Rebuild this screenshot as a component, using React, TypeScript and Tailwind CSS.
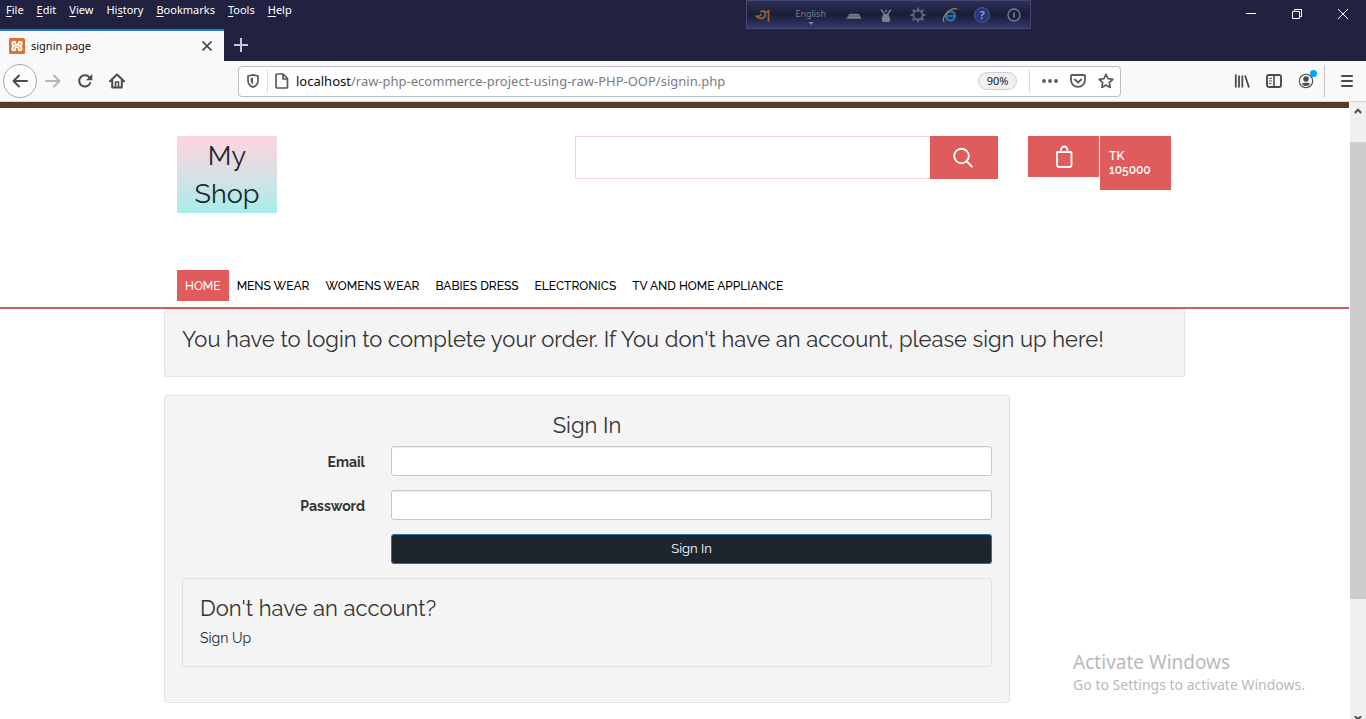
import type { ReactNode } from "react";

const menus: [string, string, string][] = [
  ["", "F", "ile"],
  ["", "E", "dit"],
  ["", "V", "iew"],
  ["Hi", "s", "tory"],
  ["", "B", "ookmarks"],
  ["", "T", "ools"],
  ["", "H", "elp"],
];

const categories = ["HOME", "MENS WEAR", "WOMENS WEAR", "BABIES DRESS", "ELECTRONICS", "TV AND HOME APPLIANCE"];

const gearTeeth = Array.from({ length: 8 }, (_, i) => i * 45);

function Icon({ children, className = "size-4" }: { children: ReactNode; className?: string }) {
  return (
    <svg
      viewBox="0 0 16 16"
      className={`shrink-0 ${className}`}
      fill="none"
      stroke="currentColor"
      strokeWidth="2"
      strokeLinecap="round"
      strokeLinejoin="round"
      aria-hidden="true"
    >
      {children}
    </svg>
  );
}

function MenuBar() {
  return (
    <nav aria-label="Menu" className="flex gap-[13px] px-1.5 pt-0.5 text-[11px] leading-4 text-white">
      {menus.map(([before, key, after]) => (
        <button key={key + after} type="button">
          {before}
          <span className="underline underline-offset-2">{key}</span>
          {after}
        </button>
      ))}
    </nav>
  );
}

function LanguageBar() {
  return (
    <div className="absolute left-[746px] top-0 flex h-[29px] w-[285px] items-center justify-end gap-4 border border-[#454870] bg-linear-to-b from-[#2e3158] via-[#1b1d37] to-[#34376a] px-2 text-[#7b7d92]">
      <button type="button" aria-label="Bangla" className="mr-auto">
        <Icon className="size-4 text-[#91692f]">
          <path d="M6 4.500c3-1.500 5 .5 4.300 3.500C9.500 11.500 5 13 1 9c2.500 1 4.500 0 5-1.500M9 5c1.500 1 3 0 4.500-1.500V14" strokeWidth="1.700" />
        </Icon>
      </button>
      <button type="button" className="mr-1 flex flex-col items-center gap-0.5 pt-1 text-[9px] leading-3">
        English
        <svg viewBox="0 0 6 3" className="h-[3px] w-1.5" fill="currentColor" aria-hidden="true">
          <path d="M0 0h6L3 3z" />
        </svg>
      </button>
      <button type="button" aria-label="Keyboard">
        <Icon>
          <path d="M3.500 7h9L15 11.500H1z" fill="currentColor" strokeWidth=".5" />
          <path d="M3 9h10" stroke="#4b4d68" strokeWidth="1" strokeDasharray="1 1" />
        </Icon>
      </button>
      <button type="button" aria-label="Mouse">
        <Icon>
          <path d="M6 7.500h4l1.800 5-.8 2H5l-.8-2z" fill="currentColor" strokeWidth="1" />
          <path d="m6.500 7.500-3-4.500M9.500 7.500l3-4.500M8 5V3" strokeWidth="1.500" />
        </Icon>
      </button>
      <button type="button" aria-label="Settings">
        <Icon className="size-4 text-[#5f637f]">
          <circle cx="8" cy="8" r="4.600" />
          {gearTeeth.map((angle) => (
            <path key={angle} d="M8 2V1.500" transform={`rotate(${angle} 8 8)`} strokeLinecap="square" />
          ))}
        </Icon>
      </button>
      <button type="button" aria-label="Web site">
        <Icon className="size-4 text-[#276ba5]">
          <path d="M12.500 11c-2 4-8.500 3-8.500-2 0-6 9-6 9 0H5" strokeWidth="2.500" />
          <path d="M2 14.500C-1 11 8 0 15 2" stroke="#a0824b" strokeWidth="1.300" />
        </Icon>
      </button>
      <button type="button" aria-label="Help" className="flex size-4 items-center justify-center rounded-full border border-[#4c5596] bg-[#2a3580] text-[11px] leading-3 font-bold text-[#9095b8]">
        ?
      </button>
      <button type="button" aria-label="About">
        <Icon>
          <circle cx="8" cy="8" r="6" strokeWidth="1.300" />
          <path d="M8 6v4" strokeWidth="1.600" />
        </Icon>
      </button>
    </div>
  );
}

function WindowButtons() {
  return (
    <div className="absolute right-[17px] top-2 flex gap-[34px] text-white">
      <button type="button" aria-label="Minimize">
        <svg viewBox="0 0 12 12" className="size-3" stroke="currentColor" fill="none" aria-hidden="true">
          <path d="M1 5.500h10" />
        </svg>
      </button>
      <button type="button" aria-label="Restore">
        <svg viewBox="0 0 12 12" className="size-3" stroke="currentColor" fill="none" aria-hidden="true">
          <path d="M1.500 3.500h7v7h-7zM3.500 3.500v-2h7v7h-2" />
        </svg>
      </button>
      <button type="button" aria-label="Close">
        <svg viewBox="0 0 12 12" className="size-3" stroke="currentColor" fill="none" aria-hidden="true">
          <path d="m1 1 10 10M11 1 1 11" />
        </svg>
      </button>
    </div>
  );
}

function Tabs() {
  return (
    <div className="flex h-8 items-stretch">
      <div className="flex w-56 items-center border-t-2 border-[#2678d8] bg-[#f9f9fb] px-2 pl-[9px]">
        <svg viewBox="0 0 16 16" className="size-4 shrink-0" aria-hidden="true">
          <rect width="16" height="16" rx="1.500" fill="#e0702d" />
          <path
            d="M5 3.700C2.800 3.700 2.800 7 5 8c-2.200 1-2.200 4.300 0 4.300 1.500 0 1.300-1 1.300-2.300 0-1 3.400-1 3.400 0 0 1.300-.2 2.300 1.300 2.300 2.200 0 2.200-3.300 0-4.300 2.200-1 2.200-4.300 0-4.300-1.500 0-1.300 1-1.300 2.300 0 1-3.400 1-3.400 0 0-1.300.2-2.300-1.300-2.300z"
            fill="none"
            stroke="#fff"
            strokeWidth="1.900"
          />
        </svg>
        <span className="ml-1.5 flex-1 text-[11px] leading-4 text-[#0c0c0d]">signin page</span>
        <button type="button" aria-label="Close tab" className="text-[#3b3b3f]">
          <svg viewBox="0 0 16 16" className="size-[18px]" stroke="currentColor" strokeWidth="1.500" aria-hidden="true">
            <path d="m4 4 8 8M12 4l-8 8" />
          </svg>
        </button>
      </div>
      <button type="button" aria-label="New tab" className="px-2 text-[#c8c8d4]">
        <svg viewBox="0 0 18 18" className="size-[18px]" stroke="currentColor" strokeWidth="2" aria-hidden="true">
          <path d="M9 2v14M2 9h14" />
        </svg>
      </button>
    </div>
  );
}

function Toolbar() {
  return (
    <div className="flex h-[41px] items-center border-b border-[#d6d6da] bg-[#f9f9fb] text-[#4a4a4f]">
      <div className="flex w-[238px] shrink-0 items-center gap-4 pl-[3px]">
        <button type="button" aria-label="Back" className="flex size-[34px] items-center justify-center rounded-full border border-[#a9a9ad] bg-[#fcfcfd]">
          <Icon><path d="M15 8H1.500M7 2.500 1.500 8 7 13.500" /></Icon>
        </button>
        <button type="button" aria-label="Forward" className="-ml-2 text-[#b4b4b9]">
          <Icon><path d="M1 8h13.500M9 2.500l5.500 5.500L9 13.500" /></Icon>
        </button>
        <button type="button" aria-label="Reload">
          <Icon>
            <path d="M12.500 4.500A5.700 5.700 0 1 0 13.200 10" />
            <path d="M15.300 1v6.300H9z" fill="currentColor" stroke="none" />
          </Icon>
        </button>
        <button type="button" aria-label="Home">
          <Icon>
            <path d="M1 8.200 8 1.500l7 6.700M3.200 7.500V14.500h9.600V7.500" />
            <path d="M6.500 14V9h3v5" strokeWidth="1.600" />
          </Icon>
        </button>
      </div>
      <div className="flex h-[31px] min-w-0 flex-1 items-center rounded-sm border border-[#bdbdc1] bg-white px-1.5 text-[#5a5a5f]">
        <button type="button" aria-label="Tracking protection" className="h-6 border-r border-[#dcdcdf] pr-1.5">
          <Icon>
            <path d="M8 1.800 13 3v4.500c0 3-2 5.500-5 6.700-3-1.200-5-3.700-5-6.700V3z" strokeWidth="1.700" />
            <path d="M8 4.500v7c-1.500-1-2.300-2.500-2.300-4V5z" fill="currentColor" stroke="none" />
          </Icon>
        </button>
        <Icon className="ml-1.5 size-4">
          <path d="M4 1h5l4.500 4.500V14a1 1 0 0 1-1 1H3a1 1 0 0 1-1-1V2a1 1 0 0 1 1-1h1M9 1.200V6h4.500" strokeWidth="1.700" />
        </Icon>
        <p className="ml-1.5 flex-1 truncate text-[13px] leading-5 text-[#7b7b80]">
          <span className="text-[#0c0c0d]">localhost</span>/raw-php-ecommerce-project-using-raw-PHP-OOP/signin.php
        </p>
        <button type="button" className="h-[18px] w-[39px] rounded-full border border-[#cfcfd2] bg-[#f0f0f2] text-[11px] leading-4 text-[#18181a]">
          90%
        </button>
        <div className="ml-3 flex h-6 items-center gap-3 border-l border-[#dcdcdf] pl-3">
          <button type="button" aria-label="Page actions">
            <Icon>
              <path d="M2 8h.01M8 8h.01M14 8h.01" strokeWidth="3.800" />
            </Icon>
          </button>
          <button type="button" aria-label="Save to Pocket">
            <Icon>
              <path d="M2 2h12c.6 0 1 .4 1 1v4.200a7 6.600 0 0 1-14 0V3c0-.6.4-1 1-1z" strokeWidth="1.800" />
              <path d="M4.800 6.500 8 9.500l3.200-3" strokeWidth="1.800" />
            </Icon>
          </button>
          <button type="button" aria-label="Bookmark this page">
            <Icon>
              <path d="m8 1.300 2 4.400 4.900.6-3.600 3.300.9 4.800L8 12l-4.200 2.400.9-4.800L1.100 6.300 6 5.700z" strokeWidth="1.700" />
            </Icon>
          </button>
        </div>
      </div>
      <div className="ml-[113px] flex h-8 shrink-0 items-center gap-4">
        <button type="button" aria-label="Library">
          <Icon>
            <path d="M1.800 1.500v13M5 2.500v12M8.300 2.500v12M11 2.500l4 12" strokeLinecap="butt" strokeWidth="1.800" />
          </Icon>
        </button>
        <button type="button" aria-label="Sidebars">
          <Icon>
            <rect x="1" y="2" width="14" height="12" rx="2" strokeWidth="1.900" />
            <path d="M8 2v12" strokeWidth="1.600" />
            <path d="M3.500 5.500h2M3.500 8h2M3.500 10.500h1.500" strokeWidth="1" />
          </Icon>
        </button>
        <button type="button" aria-label="Account" className="relative">
          <Icon>
            <circle cx="8" cy="8" r="6.700" strokeWidth="1.100" />
            <circle cx="8" cy="6" r="2.800" fill="currentColor" stroke="none" />
            <path d="M3.800 10.500C5.500 9.600 10.500 9.600 12.200 10.500 11.500 12 10 13 8 13s-3.500-1-4.200-2.500z" fill="currentColor" stroke="none" />
          </Icon>
          <span className="absolute -right-[3px] -top-[3px] size-[7px] rounded-full bg-[#00a5f5]" />
        </button>
        <button type="button" aria-label="Open menu" className="-ml-1.5 flex h-full items-center border-l border-[#c5c5c9] pl-3.5 pr-[11px]">
          <Icon>
            <path d="M3 3h10M3 8h10M3 13h10" />
          </Icon>
        </button>
      </div>
    </div>
  );
}

function ShopHeader() {
  return (
    <header className="border-b-2 border-[#cc6060] pb-1.5 pt-7">
      <div className="mx-auto max-w-[1021px] pl-[13px] pr-3.5">
        <div className="flex h-[134px] items-start">
          <a href="#home" className="w-[100px] bg-linear-to-b from-[#ffd3e0] to-[#a6edea] pt-px text-center text-[27px] leading-[38px] text-[#1c2630]">
            My
            <br />
            Shop
          </a>
          <form className="ml-auto flex h-[43px] w-[423px]">
            <input type="search" aria-label="Search" className="min-w-0 flex-1 border border-r-0 border-[#edd6ce] bg-white px-3 text-sm outline-none" />
            <button type="button" aria-label="Search" className="flex w-[68px] items-center justify-center bg-[#e05b5c] text-white">
              <svg viewBox="0 0 22 22" className="mr-0.5 size-[22px]" fill="none" stroke="currentColor" strokeWidth="1.900" strokeLinecap="round" aria-hidden="true">
                <circle cx="9.500" cy="9" r="7.300" />
                <path d="m14.800 14.300 5 5.200" />
              </svg>
            </button>
          </form>
          <a href="#cart" className="ml-[30px] flex items-start gap-px text-white">
            <span className="flex h-[41px] w-[71px] items-center justify-center bg-[#e05b5c]">
              <svg viewBox="0 0 22 24" className="h-6 w-[22px]" fill="none" stroke="currentColor" strokeWidth="1.800" strokeLinejoin="round" aria-label="Cart">
                <path d="M4 7h14.500v13a2 2 0 0 1-2 2H6a2 2 0 0 1-2-2zM8 7V5a3.250 3.500 0 0 1 6.500 0v2" />
              </svg>
            </span>
            <span className="flex h-[54px] w-[71px] items-center bg-[#e05b5c] px-[9px] text-[12px] leading-[14px] font-semibold">
              TK
              <br />
              105000
            </span>
          </a>
        </div>
        <nav aria-label="Categories" className="flex">
          {categories.map((name, i) => (
            <a
              key={name}
              href={"#" + name.toLowerCase().replaceAll(" ", "-")}
              className={`px-2 pt-px text-[12px] leading-[30px] font-medium ${i === 0 ? "bg-[#e05b5c] text-white" : "text-black"}`}
            >
              {name}
            </a>
          ))}
        </nav>
      </div>
    </header>
  );
}

const well = "rounded-[3px] border border-[#e2e2e2] bg-[#f4f4f4] px-[17px] pt-[17px]";
const heading = "text-[22px] leading-6";
const field = "h-[30px] w-full rounded-[3px] border border-[#c8c8c8] bg-white px-3 text-sm shadow-[inset_0_1px_1px_rgba(0,0,0,0.075)] outline-none";
const label = "pt-0.5 text-right text-[14px] leading-5 font-bold text-[#333]";

function SignIn() {
  return (
    <main className="mx-auto max-w-[1021px] text-[#333]">
      <section className={`${well} pb-[25px]`}>
        <h1 className={heading}>
          You have to login to complete your order. If You don't have an account, please sign up here!
        </h1>
      </section>
      <section className={`${well} mt-[18px] max-w-[846px] pb-[35px]`}>
        <h2 className={`${heading} mb-[9px] text-center`}>Sign In</h2>
        <form className="grid grid-cols-[183px_1fr] items-center gap-x-[26px] gap-y-3.5">
          <label htmlFor="email" className={label}>Email</label>
          <input id="email" type="email" className={field} />
          <label htmlFor="password" className={label}>Password</label>
          <input id="password" type="password" className={field} />
          <button type="button" className="col-start-2 h-[30px] rounded-[3px] border border-[#2f6da4] bg-[#1d252f] text-[13px] leading-5 text-white">
            Sign In
          </button>
        </form>
        <div className={`${well} mt-3.5 pb-[18px]`}>
          <h2 className={heading}>Don't have an account?</h2>
          <a href="#signup" className="mt-2 block text-[14px] leading-5 text-[#1d252f]">Sign Up</a>
        </div>
      </section>
    </main>
  );
}

function Scrollbar() {
  return (
    <div className="flex w-[17px] shrink-0 flex-col border-l border-white bg-[#f0f0f0] text-[#505050]">
      <button type="button" aria-label="Scroll up" className="flex h-[17px] items-center justify-center">
        <svg viewBox="0 0 8 6" className="h-1.5 w-2" fill="none" stroke="currentColor" strokeWidth="2" aria-hidden="true">
          <path d="m.8 5 3.200-3.300L7.200 5" />
        </svg>
      </button>
      <div className="flex flex-1 flex-col">
        <div className="flex-[23]" />
        <div className="flex-[457] bg-[#cdcdcd]" />
        <div className="flex-[109]" />
      </div>
      <button type="button" aria-label="Scroll down" className="flex h-[11px] items-end justify-center overflow-hidden">
        <svg viewBox="0 0 8 3" className="h-[3px] w-2" fill="none" stroke="currentColor" strokeWidth="2" aria-hidden="true">
          <path d="m.8 0 3.200 3.300L7.200 0" />
        </svg>
      </button>
    </div>
  );
}

export default function App() {
  return (
    <div className="relative flex h-screen flex-col overflow-hidden bg-white font-['Noto_Sans','Open_Sans',sans-serif]">
      <div className="flex h-[61px] shrink-0 flex-col justify-between bg-[#20223f]">
        <MenuBar />
        <Tabs />
      </div>
      <LanguageBar />
      <WindowButtons />
      <Toolbar />
      <div className="flex min-h-0 flex-1">
        <div className="min-w-0 flex-1 overflow-hidden border-t-[6px] border-[#573b29] font-[Raleway,Lato,sans-serif]">
          <ShopHeader />
          <SignIn />
        </div>
        <Scrollbar />
      </div>
      <aside className="pointer-events-none absolute bottom-[23px] right-[61px] text-[#b9b9b9]">
        <p className="text-[19px] leading-6">Activate Windows</p>
        <p className="text-[14px] leading-[22px]">Go to Settings to activate Windows.</p>
      </aside>
    </div>
  );
}
